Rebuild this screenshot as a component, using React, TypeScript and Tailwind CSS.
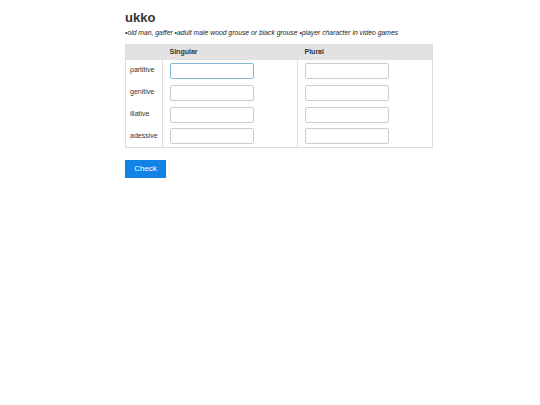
import React from "react";

const cases = ["partitive", "genitive", "illative", "adessive"];

export default function App() {
  return (
    <div className="min-h-[405px] bg-white font-['Liberation_Sans',Arial,sans-serif] text-[#333]">
      <div className="w-[308px] ml-[125px] pt-[10px]">
        <h1 className="text-[13px] font-bold leading-[15px]">ukko</h1>
        <p className="text-[6.8px] italic leading-[9px] mt-[3px] text-[#222]">
          •old man, gaffer •adult male wood grouse or black grouse •player character in video games
        </p>
        <table className="w-full mt-[7px] border-collapse border border-[#ddd] text-[7px]">
          <thead>
            <tr className="bg-[#e2e2e2] h-[15px]">
              <th className="w-[37px]"></th>
              <th className="text-left font-bold pl-[7px] w-[135px]">Singular</th>
              <th className="text-left font-bold pl-[7px]">Plural</th>
            </tr>
          </thead>
          <tbody>
            {cases.map((c, i) => (
              <tr key={c} className="h-[22px]">
                <td className="pl-[4px] border-r border-[#ddd]">{c}</td>
                <td className="pl-[7px] border-r border-[#ddd]">
                  <input
                    autoFocus={i === 0}
                    className={
                      "block w-[84px] h-[16px] rounded-[2px] border bg-white outline-none px-[3px] " +
                      (i === 0 ? "border-[#7fb8d9]" : "border-[#ccc]")
                    }
                  />
                </td>
                <td className="pl-[7px]">
                  <input className="block w-[84px] h-[16px] rounded-[2px] border border-[#ccc] bg-white outline-none" />
                </td>
              </tr>
            ))}
          </tbody>
        </table>
        <button className="mt-[12px] w-[41px] h-[18px] bg-[#1283e4] text-white text-[8px]">
          Check
        </button>
      </div>
    </div>
  );
}
